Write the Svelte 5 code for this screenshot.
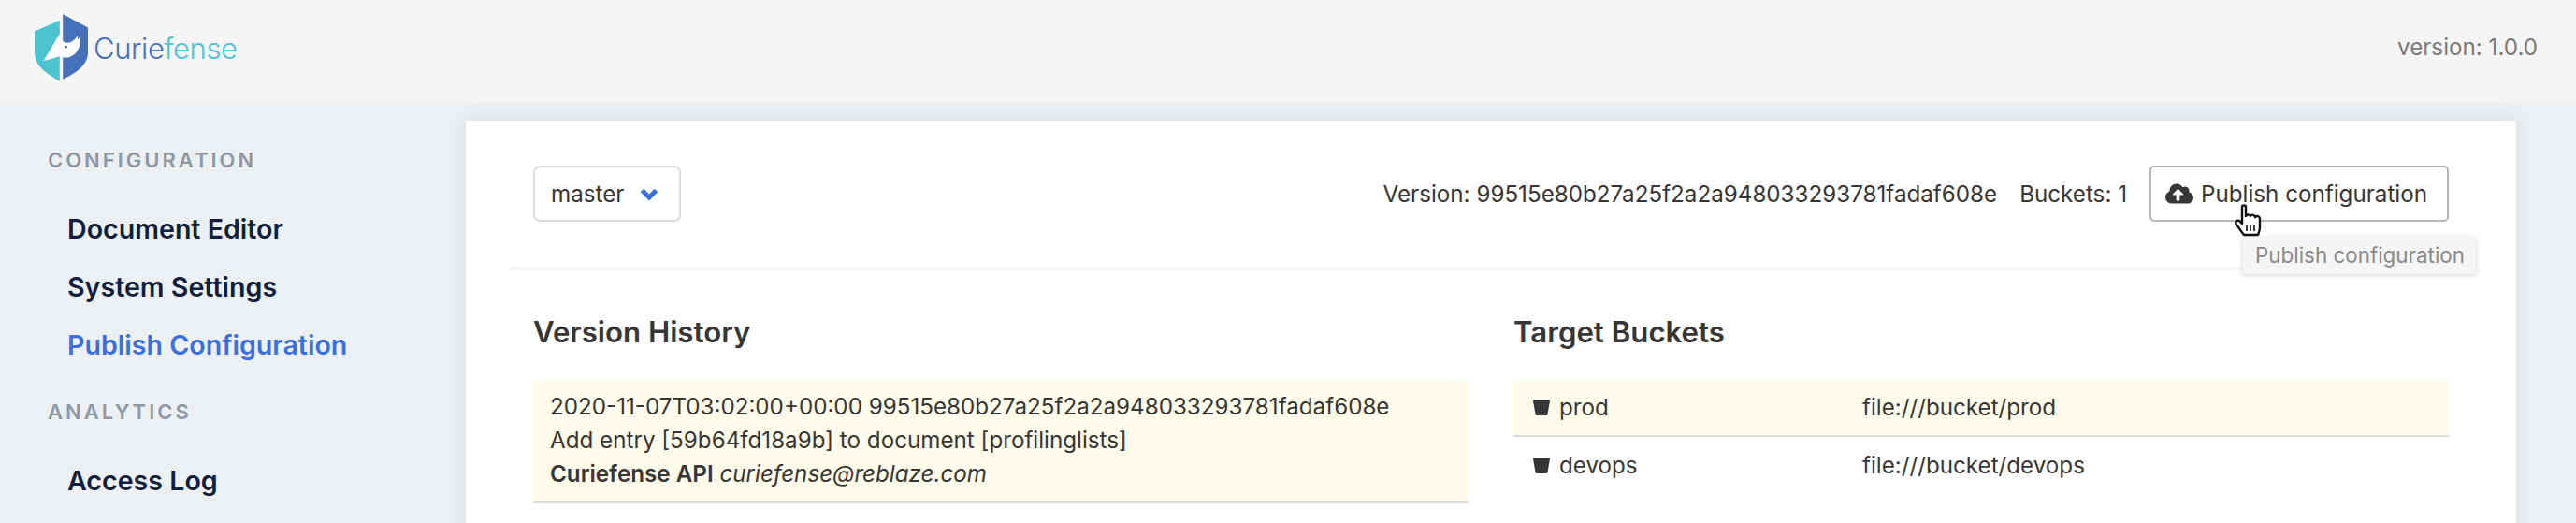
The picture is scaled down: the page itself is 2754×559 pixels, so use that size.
<script>
	const menu = [
		{ title: "CONFIGURATION", items: ["Document Editor", "System Settings", "Publish Configuration"] },
		{ title: "ANALYTICS", items: ["Access Log"] },
	];
	const buckets = [
		{ name: "prod", url: "file:///bucket/prod", selected: true },
		{ name: "devops", url: "file:///bucket/devops", selected: false },
	];
</script>

<div class="page">
	<header class="topbar">
		<div class="brand">
			<svg class="shield" viewBox="110 45 170 215" width="57" height="72">
				<path fill="#4cc3d0" d="M110 100L190 65V260C150 235 112 215 110 170Z" />
				<path fill="#4570ba" d="M200 45L280 88V170C278 210 240 235 200 253Z" />
				<path fill="#fff" d="M138 195L190 108V118L205 135C222 140 238 132 246 114L248 128L254 118C260 145 248 172 222 182C210 186 198 183 190 180Z" />
				<circle cx="210" cy="150" r="4" fill="#4570ba" />
			</svg>
			<span class="wordmark"><span class="curie">Curie</span><span class="fense">fense</span></span>
		</div>
		<span class="app-version">version: 1.0.0</span>
	</header>

	<div class="main">
		<aside class="sidebar">
			{#each menu as group}
				<p class="menu-label">{group.title}</p>
				<ul class="menu-list">
					{#each group.items as item}
						<li class:active={item === "Publish Configuration"}>{item}</li>
					{/each}
				</ul>
			{/each}
		</aside>

		<section class="card">
			<div class="toolbar">
				<div class="select">
					<span>master</span>
					<svg viewBox="0 0 20 14" width="20" height="14">
						<path d="M2.5 3.5L10 11L17.5 3.5" fill="none" stroke="#3b6fdc" stroke-width="5" />
					</svg>
				</div>
				<div class="toolbar-right">
					<span class="version">Version: 99515e80b27a25f2a2a948033293781fadaf608e</span>
					<span class="bucket-count">Buckets: 1</span>
					<div class="publish-wrap">
						<button class="publish">
							<svg viewBox="0 0 640 512" width="30" height="24">
								<path fill="#363636" d="M537.6 226.6c4.1-10.7 6.4-22.4 6.4-34.6 0-53-43-96-96-96-19.7 0-38.1 6-53.3 16.2C367 64.2 315.3 32 256 32c-88.4 0-160 71.6-160 160 0 2.7.1 5.4.2 8.1C40.2 219.8 0 273.2 0 336c0 79.5 64.5 144 144 144h368c70.7 0 128-57.3 128-128 0-61.9-44-113.6-102.4-125.4zM393.4 288H328v112c0 8.8-7.2 16-16 16h-48c-8.8 0-16-7.2-16-16V288h-65.4c-14.3 0-21.4-17.2-11.3-27.3l105.4-105.4c6.2-6.2 16.4-6.2 22.6 0l105.4 105.4c10.1 10.1 2.9 27.3-11.3 27.3z" />
							</svg>
							Publish configuration
						</button>
						<svg class="cursor" viewBox="0 0 32 36" width="32" height="36">
							<path fill="#fff" stroke="#111" stroke-width="2.4" stroke-linejoin="round" d="M9 3C9 1 13 1 13 3V13C14 11 17 11 18 13C19 11 22 11 23 14C25 12 28 13 28 16V25C28 28 27 30 26 33H11C9 30 7 28 3 22C1 19 3 17 6 18L9 21Z" />
							<path stroke="#111" stroke-width="1.6" d="M14 22V29M18 22V29M22 22V29" />
						</svg>
						<div class="tooltip">Publish configuration</div>
					</div>
				</div>
			</div>

			<div class="columns">
				<div class="column">
					<h3>Version History</h3>
					<div class="commit">
						<p>2020-11-07T03:02:00+00:00 99515e80b27a25f2a2a948033293781fadaf608e</p>
						<p>Add entry [59b64fd18a9b] to document [profilinglists]</p>
						<p><strong>Curiefense API</strong> <em>curiefense@reblaze.com</em></p>
					</div>
				</div>
				<div class="column">
					<h3>Target Buckets</h3>
					{#each buckets as bucket}
						<div class="bucket-row" class:selected={bucket.selected}>
							<span class="bucket-name">
								<svg viewBox="0 0 18 17" width="18" height="17">
									<path fill="#363636" d="M0 1.5Q0 0 1.5 0H16.5Q18 0 18 1.5L15.5 15.5Q15.2 17 14 17H4Q2.8 17 2.5 15.5Z" />
								</svg>
								{bucket.name}
							</span>
							<span>{bucket.url}</span>
						</div>
					{/each}
				</div>
			</div>
		</section>
	</div>
</div>

<style>
	:global(body) {
		margin: 0;
		background: #edf0f3;
		overflow: hidden;
	}
	.page {
		height: 559px;
		overflow: hidden;
		font-family: Inter, "Liberation Sans", sans-serif;
		font-size: 24.2px;
		color: #363636;
	}
	.topbar {
		height: 109px;
		box-sizing: border-box;
		background: #f5f5f5;
		display: flex;
		align-items: center;
		justify-content: space-between;
		padding: 0 41px 8px 37px;
	}
	.brand {
		display: flex;
		align-items: center;
		gap: 6px;
	}
	.wordmark {
		font-size: 31px;
		letter-spacing: -0.4px;
		font-weight: 300;
		margin-top: 2px;
	}
	.curie {
		color: #4570ba;
	}
	.fense {
		color: #4cc3d0;
	}
	.app-version {
		color: #7a7a7a;
	}
	.main {
		display: flex;
		align-items: flex-start;
	}
	.sidebar {
		width: 498px;
		flex: none;
		box-sizing: border-box;
		padding: 49px 0 0 51px;
	}
	.menu-label {
		margin: 0 0 29px;
		font-size: 22px;
		line-height: 27px;
		font-weight: 600;
		letter-spacing: 3px;
		color: #8f98a5;
	}
	.menu-list {
		list-style: none;
		margin: 0 0 27px;
		padding: 0 0 0 21px;
	}
	.menu-list li {
		font-size: 28.6px;
		line-height: 62px;
		font-weight: 600;
		color: #101f3f;
	}
	.menu-list li.active {
		color: #3b6fdc;
	}
	.card {
		width: 2192px;
		height: 500px;
		flex: none;
		margin-top: 20px;
		box-sizing: border-box;
		padding: 48px;
		background: #fff;
		box-shadow: 0 0 20px rgba(10, 10, 10, 0.1);
	}
	.toolbar {
		display: flex;
		align-items: center;
		justify-content: space-between;
		padding: 0 24px 48px;
		border-bottom: 4px solid #f5f5f5;
	}
	.select {
		width: 158px;
		height: 60px;
		box-sizing: border-box;
		border: 2px solid #dbdbdb;
		border-radius: 7px;
		display: flex;
		align-items: center;
		justify-content: space-between;
		padding: 0 22px 0 17px;
	}
	.toolbar-right {
		display: flex;
		align-items: center;
	}
	.bucket-count {
		margin-left: 24px;
		margin-right: 24px;
	}
	.publish-wrap {
		position: relative;
	}
	.publish {
		width: 320px;
		height: 60px;
		box-sizing: border-box;
		border: 2px solid #b5b5b5;
		border-radius: 5px;
		background: #fff;
		color: #363636;
		font: inherit;
		display: flex;
		align-items: center;
		gap: 8px;
		padding: 0 0 0 15px;
	}
	.cursor {
		position: absolute;
		left: 90px;
		top: 41px;
	}
	.tooltip {
		position: absolute;
		left: 100px;
		top: 77px;
		width: 249px;
		height: 39px;
		box-sizing: border-box;
		background: #f5f5f5;
		color: #8a8a8a;
		font-size: 22.4px;
		line-height: 37px;
		padding-left: 13px;
		white-space: nowrap;
		box-shadow: 0 1px 6px rgba(10, 10, 10, 0.18);
	}
	.columns {
		display: grid;
		grid-template-columns: 1000px 1000px;
		gap: 48px;
		padding: 0 24px;
		margin-top: 46px;
	}
	h3 {
		margin: 0 0 29px;
		font-size: 31.2px;
		line-height: 41px;
		font-weight: 600;
	}
	.commit {
		background: #fffbeb;
		border-bottom: 2px solid #dbdbdb;
		padding: 12px 18px 11px;
		line-height: 36px;
	}
	.commit p {
		margin: 0;
	}
	strong {
		font-weight: 600;
	}
	.bucket-row {
		height: 62px;
		box-sizing: border-box;
		display: grid;
		grid-template-columns: 352px 1fr;
		align-items: center;
		padding: 0 21px;
		border-bottom: 2px solid transparent;
	}
	.bucket-row.selected {
		background: #fffbeb;
		border-bottom-color: #dbdbdb;
	}
	.bucket-name {
		display: flex;
		align-items: center;
		gap: 10px;
	}
</style>
